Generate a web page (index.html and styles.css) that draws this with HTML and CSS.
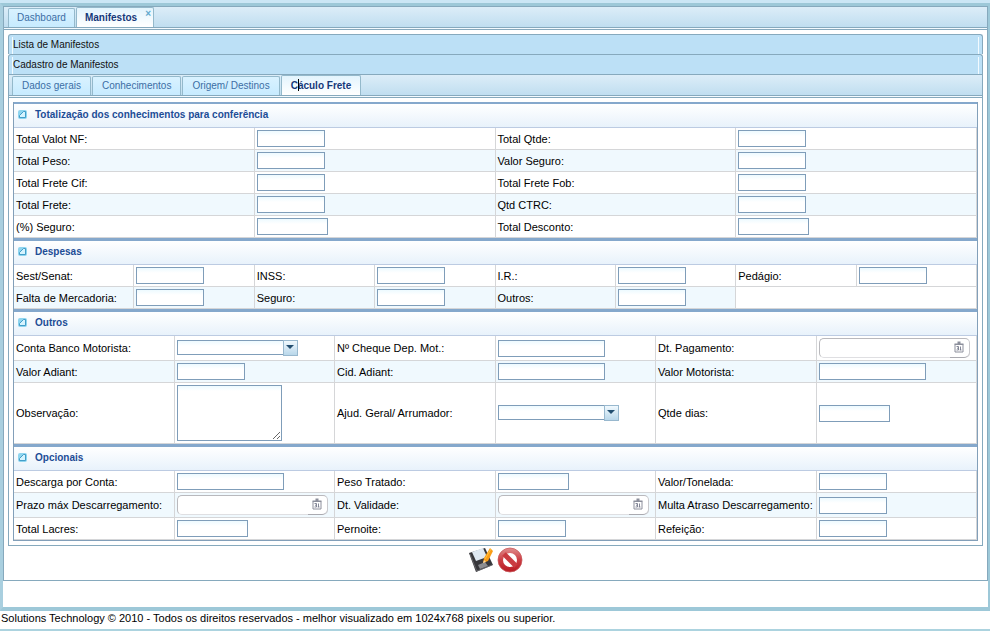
FILE: index.html
```html
<!DOCTYPE html>
<html lang="pt-BR">
<head>
<meta charset="utf-8">
<title>Manifestos</title>
<link rel="stylesheet" href="styles.css">
</head>
<body>
<svg class="defs" aria-hidden="true">
  <symbol id="mark" viewBox="0 0 9 9"><rect width="9" height="9" rx="2" fill="#8fd5ef"/><path d="M1.500 7.500V5.500L5.500 1.500H7.500V7.500Z" fill="#d5f3fe" stroke="#3795c4" stroke-width=".9"/></symbol>
  <symbol id="calendar" viewBox="0 0 10 12"><path d="M1 3.500H9V11H1Z" fill="#fff" stroke="#8c8f9c"/><path d="M.5 2.500H9.500V4H.5ZM3.500 .5H6.500V3H3.500Z" fill="#8c8f9c"/><path d="M2.500 5.500H4.500V9H2.500M3 7.200H4.500M6.500 5.500V9M5.700 9H7.500" fill="none" stroke="#777b8c" stroke-width=".9"/></symbol>
</svg>
<div class="shell">
  <main class="panel">
    <nav class="tabs">
      <button class="tab" type="button">Dashboard</button>
      <button class="tab active closable" type="button">Manifestos<span class="close">×</span></button>
    </nav>
    <div class="workspace">
      <button class="bar" type="button"><span>Lista de Manifestos</span></button>
      <button class="bar" type="button"><span>Cadastro de Manifestos</span></button>
      <div class="bar-body">
        <nav class="tabs">
          <button class="tab" type="button">Dados gerais</button>
          <button class="tab" type="button">Conhecimentos</button>
          <button class="tab" type="button">Origem/ Destinos</button>
          <button class="tab active" type="button">C<span class="caret"></span>áculo Frete</button>
        </nav>
        <form class="sections">
          <section>
            <h2><svg><use href="#mark"/></svg>Totalização dos conhecimentos para conferência</h2>
            <table>
              <tr><td><label for="nf">Total Valot NF:</label></td><td><input id="nf"></td><td><label for="qtde">Total Qtde:</label></td><td><input id="qtde"></td></tr>
              <tr><td><label for="peso">Total Peso:</label></td><td><input id="peso"></td><td><label for="vseg">Valor Seguro:</label></td><td><input id="vseg"></td></tr>
              <tr><td><label for="cif">Total Frete Cif:</label></td><td><input id="cif"></td><td><label for="fob">Total Frete Fob:</label></td><td><input id="fob"></td></tr>
              <tr><td><label for="frete">Total Frete:</label></td><td><input id="frete"></td><td><label for="ctrc">Qtd CTRC:</label></td><td><input id="ctrc"></td></tr>
              <tr><td><label for="pseg">(%) Seguro:</label></td><td><input id="pseg" class="mid"></td><td><label for="desc">Total Desconto:</label></td><td><input id="desc" class="mid"></td></tr>
            </table>
          </section>
          <section>
            <h2><svg><use href="#mark"/></svg>Despesas</h2>
            <table>
              <tr><td><label for="sest">Sest/Senat:</label></td><td><input id="sest"></td><td><label for="inss">INSS:</label></td><td><input id="inss"></td><td><label for="ir">I.R.:</label></td><td><input id="ir"></td><td><label for="ped">Pedágio:</label></td><td><input id="ped"></td></tr>
              <tr><td><label for="falta">Falta de Mercadoria:</label></td><td><input id="falta"></td><td><label for="seg">Seguro:</label></td><td><input id="seg"></td><td><label for="outros">Outros:</label></td><td><input id="outros"></td><td class="blank" colspan="2"></td></tr>
            </table>
          </section>
          <section>
            <h2><svg><use href="#mark"/></svg>Outros</h2>
            <table>
              <tr><td><label for="conta">Conta Banco Motorista:</label></td><td><span class="combo"><select id="conta"><option></option></select></span></td><td><label for="cheque">Nº Cheque Dep. Mot.:</label></td><td><input id="cheque" class="wide"></td><td><label for="dtpag">Dt. Pagamento:</label></td><td><span class="date"><input id="dtpag"><button type="button" aria-label="Calendário"><svg><use href="#calendar"/></svg></button></span></td></tr>
              <tr><td><label for="vadi">Valor Adiant:</label></td><td><input id="vadi"></td><td><label for="cadi">Cid. Adiant:</label></td><td><input id="cadi" class="wide"></td><td><label for="vmot">Valor Motorista:</label></td><td><input id="vmot" class="wide"></td></tr>
              <tr><td><label for="obs">Observação:</label></td><td><textarea id="obs"></textarea></td><td><label for="ajud">Ajud. Geral/ Arrumador:</label></td><td><span class="combo"><select id="ajud"><option></option></select></span></td><td><label for="dias">Qtde dias:</label></td><td><input id="dias" class="mid"></td></tr>
            </table>
          </section>
          <section>
            <h2><svg><use href="#mark"/></svg>Opcionais</h2>
            <table>
              <tr><td><label for="dconta">Descarga por Conta:</label></td><td><input id="dconta" class="wide"></td><td><label for="trat">Peso Tratado:</label></td><td><input id="trat" class="mid"></td><td><label for="ton">Valor/Tonelada:</label></td><td><input id="ton"></td></tr>
              <tr><td><label for="prazo">Prazo máx Descarregamento:</label></td><td><span class="date"><input id="prazo"><button type="button" aria-label="Calendário"><svg><use href="#calendar"/></svg></button></span></td><td><label for="val">Dt. Validade:</label></td><td><span class="date"><input id="val"><button type="button" aria-label="Calendário"><svg><use href="#calendar"/></svg></button></span></td><td><label for="multa">Multa Atraso Descarregamento:</label></td><td><input id="multa"></td></tr>
              <tr><td><label for="lacres">Total Lacres:</label></td><td><input id="lacres" class="mid"></td><td><label for="pern">Pernoite:</label></td><td><input id="pern"></td><td><label for="ref">Refeição:</label></td><td><input id="ref"></td></tr>
            </table>
          </section>
        </form>
      </div>
    </div>
    <div class="actions">
      <button type="button" aria-label="Salvar">
        <svg viewBox="0 0 26 26">
          <path d="M1 6 17 1 25 18 8 25Z" fill="#37373b"/>
          <path d="M4 5 15 1 19 10 8 14Z" fill="#dfe9f2"/>
          <path d="M10 18 17 15 20 19 12 22Z" fill="#8b8c90"/>
          <path d="M2 7 8 22 9 24 24 18" fill="none" stroke="#77777b" stroke-width=".7"/>
          <path d="M22 1 25 4 20 14 15 16 16 11Z" fill="#fa9d17"/>
          <path d="M23 2 17 12" stroke="#ffc23c"/>
          <path d="M15 16 16 13 18 15Z" fill="#f2d7a7"/>
        </svg>
      </button>
      <button type="button" aria-label="Cancelar">
        <svg viewBox="0 0 26 26">
          <defs><linearGradient id="red" x2="0" y2="1"><stop stop-color="#e08e8e"/><stop offset=".5" stop-color="#cc3d43"/><stop offset="1" stop-color="#b81a23"/></linearGradient></defs>
          <circle cx="13" cy="13" r="12" fill="url(#red)" stroke="#c8595c" stroke-width=".8"/>
          <circle cx="13" cy="13" r="7" fill="#fff"/>
          <path d="M7 7 19 19" stroke="#ca3b41" stroke-width="5"/>
        </svg>
      </button>
    </div>
  </main>
</div>
<footer>Solutions Technology © 2010 - Todos os direitos reservados - melhor visualizado em 1024x768 pixels ou superior.</footer>
</body>
</html>
```
FILE: styles.css
```css
*, ::before, ::after { box-sizing: border-box; }
html { border-top: 3px solid #cbe6f5; }
body {
  margin: 0;
  background: #fff;
  color: #000;
  font: 11px/14px "Liberation Sans", Arial, sans-serif;
}
button, input, select, textarea { margin: 0; font: inherit; }
.defs { display: none; }

.shell {
  padding-bottom: 26px;
  border: solid #9dc8d8;
  border-width: 3px 2px 4px 3px;
  border-left-color: #a9cfdf;
}
.panel { border: 1px solid #86a9bd; }

.tabs {
  display: flex;
  align-items: flex-end;
  gap: 1px;
  height: 23px;
  padding: 0 4px 2px;
  border-bottom: 1px solid #86a9bd;
  background: linear-gradient(#dcedf8, #c0def0 20px, #86a9bd 20px, #86a9bd 21px, #f4fbff 21px);
}
.tab {
  position: relative;
  height: 19px;
  padding: 0 8px;
  border: 1px solid #94b9cb;
  border-bottom: 0;
  border-radius: 2px 2px 0 0;
  background: linear-gradient(#d9f2ff, #c7ebff);
  color: #3c6ea5;
  font-size: 10px;
  line-height: 16px;
  white-space: nowrap;
}
.tab.active {
  height: 20px;
  background: linear-gradient(#e3f4fd, #fff);
  color: #15387a;
  font-weight: bold;
}
.bar-body .tab { padding: 0 9px; }
.bar-body .tabs { padding-left: 3px; }
.tab.closable { padding-right: 16px; }
.close {
  position: absolute;
  top: -2px;
  right: 2px;
  color: #62a9cd;
}
.caret {
  position: absolute;
  top: 3px;
  width: 1px;
  height: 12px;
  background: #000;
}

.workspace { margin: 4px; }
.bar {
  display: block;
  width: 100%;
  height: 20px;
  padding: 2px 3px 0;
  border: 1px solid #86a9bd;
  border-bottom: 0;
  border-radius: 3px 3px 0 0;
  background: #bce0f6;
  color: #111;
  font-size: 10px;
  text-align: left;
}
.bar span {
  display: block;
  height: 17px;
  border: solid #f2faff;
  border-width: 0 1px;
  line-height: 16px;
}
.bar-body { border: 1px solid #86a9bd; }

.sections {
  margin: 4px;
  border: 1px solid #829fb9;
  border-top: 0;
}
section { border-top: 3px solid #85a8cc; }
section:first-child { border-top-width: 2px; }
h2 {
  display: flex;
  align-items: center;
  gap: 8px;
  height: 24px;
  margin: 0;
  padding: 0 4px 2px;
  border-bottom: 1px solid #bccbe2;
  background: linear-gradient(#fff, #e8f2fb);
  color: #1d4d96;
  font-size: 10px;
}
h2 svg { width: 9px; height: 9px; }

table { width: 100%; table-layout: fixed; border-spacing: 0; }
td {
  padding: 2px;
  border: solid #d5d6d8;
  border-width: 0 1px 1px 0;
  white-space: nowrap;
}
tr:nth-child(even) { background: #f0f9fe; }
td.blank { background: #fff; }
td input, select, textarea {
  display: block;
  border: 1px solid #7f9db9;
  border-radius: 0;
  background: linear-gradient(#edfaff, #fff 5px);
}
td input { width: 68px; height: 17px; padding: 0 2px; }
td .mid { width: 71px; }
td .wide { width: 107px; }
textarea { width: 105px; height: 56px; resize: both; }

.combo { display: block; position: relative; width: 121px; height: 16px; }
select { width: 107px; height: 15px; appearance: none; }
.combo::before {
  content: "";
  position: absolute;
  top: 0;
  right: 0;
  width: 15px;
  height: 16px;
  border: 1px solid #98b8ce;
  background: linear-gradient(#f0f9fe, #b9d7ea);
  pointer-events: none;
}
.combo::after {
  content: "";
  position: absolute;
  top: 5px;
  right: 4px;
  border: solid transparent;
  border-width: 4px 4px 0;
  border-top-color: #234f70;
  pointer-events: none;
}

.date {
  display: flex;
  position: relative;
  width: 151px;
}
td .date input {
  width: 100%;
  height: 20px;
  padding-right: 22px;
  border-color: #b9b9bd #c9c9cd #dfdfe2 #b9b9bd;
  border-radius: 5px;
  background: #fff;
}
.date button {
  position: absolute;
  right: 1px;
  bottom: 0;
  width: 19px;
  height: 18px;
  padding: 0 0 3px;
  border: 0;
  border-bottom: 1px solid #aaaab0;
  border-radius: 0 0 5px;
  background: transparent;
}
.date svg { display: block; width: 10px; height: 12px; margin: 0 auto; }

.actions {
  display: flex;
  justify-content: center;
  align-items: flex-start;
  gap: 3px;
  height: 30px;
}
.actions button { height: 26px; margin-top: -3px; padding: 0; border: 0; background: none; }
.actions svg { display: block; width: 26px; height: 26px; }

footer {
  padding: 0 1px 4px;
  border-bottom: 2px solid #acd3df;
}
```
